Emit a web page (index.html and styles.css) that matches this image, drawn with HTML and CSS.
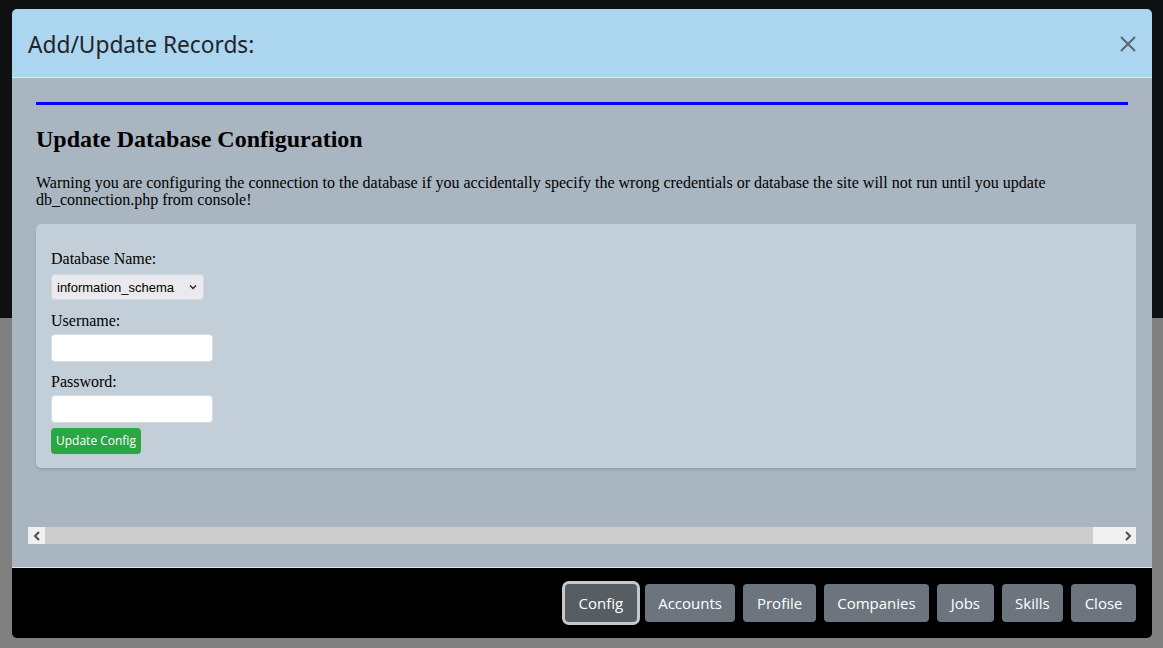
FILE: index.html
```html
<!DOCTYPE html>
<html>
<head>
<meta charset="utf-8">
<link rel="stylesheet" href="styles.css">
</head>
<body>
<div class="backdrop"></div>
<div class="modal">
  <div class="modal-header">
    <div class="modal-title">Add/Update Records:</div>
    <div class="close-x">
      <svg width="16" height="16" viewBox="0 0 16 16"><path d="M1 1 L15 15 M15 1 L1 15" stroke="#5b6670" stroke-width="2" fill="none"/></svg>
    </div>
  </div>
  <div class="modal-body">
    <div class="frame">
      <div class="viewport">
        <div class="doc">
          <div class="rule"></div>
          <h2 class="doc-title">Update Database Configuration</h2>
          <p class="warning">Warning you are configuring the connection to the database if you accidentally specify the wrong credentials or database the site will not run until you update db_connection.php from console!</p>
          <div class="card">
            <div class="field-label">Database Name:</div>
            <div class="select">information_schema
              <svg width="8" height="6" viewBox="0 0 8 6"><path d="M1 1.5 L4 4.5 L7 1.5" stroke="#222" stroke-width="1.3" fill="none"/></svg>
            </div>
            <div class="field-label">Username:</div>
            <div class="input"></div>
            <div class="field-label">Password:</div>
            <div class="input"></div>
            <div class="btn-green">Update Config</div>
          </div>
        </div>
      </div>
      <div class="hscroll">
        <div class="sb-btn"><svg width="8" height="10" viewBox="0 0 8 10"><path d="M6 1 L2 5 L6 9" stroke="#505050" stroke-width="2" fill="none"/></svg></div>
        <div class="sb-thumb"></div>
        <div class="sb-track"></div>
        <div class="sb-btn"><svg width="8" height="10" viewBox="0 0 8 10"><path d="M2 1 L6 5 L2 9" stroke="#505050" stroke-width="2" fill="none"/></svg></div>
      </div>
    </div>
  </div>
  <div class="modal-footer">
    <div class="btn active">Config</div>
    <div class="btn">Accounts</div>
    <div class="btn">Profile</div>
    <div class="btn">Companies</div>
    <div class="btn">Jobs</div>
    <div class="btn">Skills</div>
    <div class="btn">Close</div>
  </div>
</div>
</body>
</html>
```
FILE: styles.css
```css
html, body {
  margin: 0;
  padding: 0;
}
body {
  width: 1163px;
  height: 648px;
  overflow: hidden;
  background: linear-gradient(to bottom, #0f1011 0, #0f1011 318px, #808080 318px, #808080 100%);
  font-family: "Open Sans", "Noto Sans", sans-serif;
  position: relative;
}
.backdrop {
  height: 648px;
}
.modal {
  position: absolute;
  left: 12px;
  top: 9px;
  width: 1140px;
  height: 629px;
  display: flex;
  flex-direction: column;
  border-radius: 5px;
  overflow: hidden;
}
.modal-header {
  height: 69px;
  flex: none;
  background: #acd5f0;
  border-bottom: 1px solid #dfe8ee;
  display: flex;
  align-items: center;
  justify-content: space-between;
  padding: 0 16px;
  box-sizing: border-box;
}
.modal-title {
  font-family: "Noto Sans", "Open Sans", sans-serif;
  font-size: 22.7px;
  color: #212529;
  padding-top: 2px;
}
.close-x {
  display: flex;
  padding-top: 2px;
}
.modal-body {
  height: 490px;
  flex: none;
  background: #a9b6c1;
  border-bottom: 1px solid #dfe6ec;
  padding: 16px 16px 0 16px;
  box-sizing: border-box;
}
.frame {
  width: 1108px;
  height: 450px;
  display: flex;
  flex-direction: column;
}
.viewport {
  flex: 1;
  overflow: hidden;
}
.doc {
  padding: 8px 0 0 8px;
  width: 1092px;
  font-family: "Liberation Serif", serif;
  color: #000;
}
.rule {
  height: 3px;
  background: #0000ff;
}
.doc-title {
  font-size: 24px;
  font-weight: bold;
  margin: 20px 0 0 0;
  line-height: 28px;
}
.warning {
  font-size: 16px;
  line-height: 17px;
  margin: 21px 0 0 0;
}
.card {
  margin-top: 16px;
  width: 1110px;
  height: 244px;
  box-sizing: border-box;
  background: #c3cfd8;
  border-radius: 5px;
  box-shadow: 0 2px 3px rgba(0,0,0,0.12);
  padding: 25px 15px 0 15px;
  display: flex;
  flex-direction: column;
  align-items: flex-start;
}
.field-label {
  font-size: 16px;
  line-height: 19px;
}
.select {
  margin-top: 6px;
  margin-bottom: 11px;
  width: 153px;
  height: 26px;
  box-sizing: border-box;
  background: #e9e9ee;
  border: 1px solid #d5d8dc;
  border-radius: 4px;
  display: flex;
  align-items: center;
  justify-content: space-between;
  padding: 0 6px 0 5px;
  font-family: "Liberation Sans", Arial, sans-serif;
  font-size: 13px;
  color: #000;
}
.input {
  margin-top: 4px;
  margin-bottom: 10px;
  width: 162px;
  height: 28px;
  box-sizing: border-box;
  background: #fff;
  border: 1px solid #d8dcdf;
  border-radius: 4px;
}
.input + .btn-green {
  margin-top: -5px;
}
.btn-green {
  background: #28a745;
  color: #fff;
  font-family: "Open Sans", sans-serif;
  font-size: 12px;
  height: 26px;
  line-height: 26px;
  padding: 0 5px;
  border-radius: 4px;
}
.hscroll {
  height: 17px;
  flex: none;
  display: flex;
  background: #f0f0f0;
}
.sb-btn {
  width: 17px;
  display: flex;
  align-items: center;
  justify-content: center;
}
.sb-thumb {
  width: 1048px;
  background: #cdcdcd;
}
.sb-track {
  flex: 1;
}
.modal-footer {
  flex: 1;
  background: #000;
  display: flex;
  justify-content: flex-end;
  align-items: flex-start;
  gap: 8px;
  padding: 16px 16px 0 16px;
}
.btn {
  height: 38px;
  box-sizing: border-box;
  padding: 0 13.5px;
  background: #6c757d;
  color: #fff;
  font-family: "Open Sans", sans-serif;
  font-size: 15px;
  display: flex;
  align-items: center;
  border-radius: 4px;
}
.btn.active {
  background: #565e64;
  box-shadow: 0 0 0 3px #c6c9cc;
}
```
